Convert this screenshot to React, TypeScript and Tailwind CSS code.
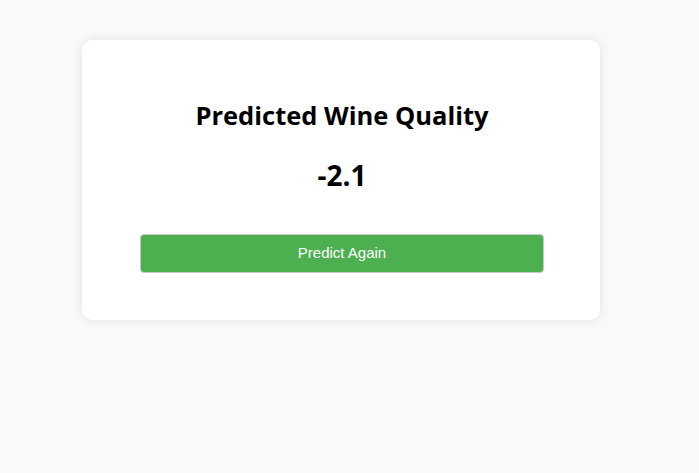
export default function App() {
  return (
    <div className="min-h-[473px] w-full bg-[#f9f9f9] pt-10" style={{ fontFamily: '"Open Sans", "Noto Sans", sans-serif' }}>
      <div className="ml-[82px] w-[518px] rounded-[10px] bg-white pl-[58px] pr-[56px] pt-[40px] pb-[47px] shadow-[0_0_10px_rgba(0,0,0,0.1)]">
        <h2 className="mt-[19px] text-center text-[25.5px] font-bold leading-[32px] text-black">Predicted Wine Quality</h2>
        <p className="mt-[26px] text-center text-[28px] font-bold leading-[36px] text-black">-2.1</p>
        <button
          className="mt-[41px] h-[39px] w-full rounded-[4px] border border-[#c8c8c8] bg-[#4caf50] text-[15px] text-white"
          style={{ fontFamily: '"Liberation Sans", Arial, sans-serif' }}
        >
          Predict Again
        </button>
      </div>
    </div>
  )
}
